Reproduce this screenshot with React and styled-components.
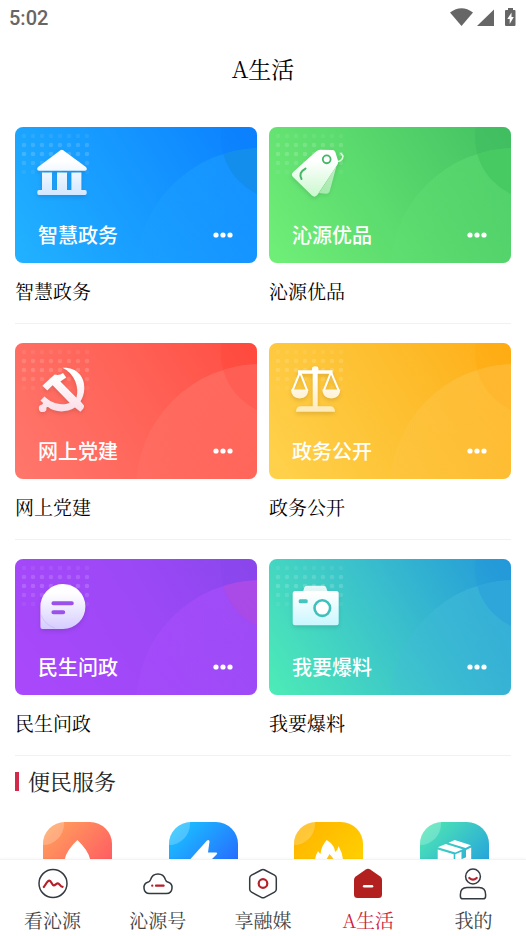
import React from 'react';
import styled, { createGlobalStyle } from 'styled-components';

const serif = "'Noto Serif CJK SC', 'Noto Serif SC', 'Liberation Serif', 'Noto Sans CJK SC', serif";
const sans = "'Noto Sans CJK SC', sans-serif";

const GlobalStyle = createGlobalStyle`
  * {
    box-sizing: border-box;
  }

  body {
    margin: 0;
    background: #fff;
    color: #000;
    font-family: ${serif};
  }

  a {
    color: inherit;
    text-decoration: none;
  }
`;

const Screen = styled.div`
  display: flex;
  flex-direction: column;
  height: 100vh;
`;

const StatusBar = styled.div`
  flex: none;
  display: flex;
  align-items: center;
  justify-content: space-between;
  height: 36px;
  padding: 0 8px 0 9px;
  color: #666;
  font: 500 20px/36px Roboto, sans-serif;
`;

const StatusIcons = styled.svg`
  display: block;
  width: 68px;
  height: 20px;
`;

const Header = styled.header`
  flex: none;
  display: flex;
  align-items: center;
  justify-content: center;
  height: 65px;
`;

const Title = styled.h1`
  margin: 0;
  font-size: 23px;
  font-weight: 400;
  line-height: 32px;
`;

const Content = styled.main`
  flex: 1;
  min-height: 0;
  overflow-y: auto;
  padding-top: 26px;
  scrollbar-width: none;
`;

const CardRow = styled.section`
  display: grid;
  grid-template-columns: 1fr 1fr;
  column-gap: 12px;
  margin: 0 15px 19px;
  border-bottom: 1px solid #f1f1f1;
`;

const CardLink = styled.a`
  display: block;
`;

const Card = styled.div`
  position: relative;
  display: flex;
  align-items: flex-end;
  justify-content: space-between;
  aspect-ratio: 16 / 9;
  padding: 0 24px 14px 23px;
  overflow: hidden;
  border-radius: 8px;
  background: ${(props) => props.$background};
  color: #fff;
`;

const CardArt = styled.svg`
  position: absolute;
  inset: 0;
  width: 100%;
  height: 100%;
`;

const CardName = styled.span`
  position: relative;
  font: 500 20px/28px ${sans};
`;

const More = styled.svg`
  position: relative;
  width: 20px;
  height: 28px;
`;

const Caption = styled.div`
  height: 60px;
  font-size: 19px;
  line-height: 56px;
`;

const SectionTitle = styled.h2`
  display: flex;
  align-items: center;
  gap: 9px;
  margin: 0 15px;
  height: 12px;
  color: #222;
  font-size: 22px;
  font-weight: 400;
  line-height: 28px;

  &::before {
    content: '';
    width: 4px;
    height: 19px;
    background: #d12a4a;
  }
`;

const Services = styled.div`
  display: grid;
  grid-template-columns: repeat(4, 1fr);
  justify-items: center;
  padding: 35px 9px 24px 15px;
`;

const ServiceLink = styled.a`
  display: block;
  width: 69px;
  height: 69px;
  overflow: hidden;
  border-radius: 22px;
  background: ${(props) => props.$background};

  svg {
    display: block;
  }
`;

const TabBar = styled.nav`
  flex: none;
  display: flex;
  height: 77px;
  border-top: 1px solid #f3f3f3;
  background: #fff;
  box-shadow: 0 -1px 2px rgba(0, 0, 0, 0.03);
  z-index: 1;
`;

const Tab = styled.a`
  flex: 1;
  display: flex;
  flex-direction: column;
  align-items: center;
  gap: 7px;
  padding-top: 9px;
  color: ${(props) => (props.$active ? '#cf1f42' : '#444')} !important;
  font-size: 19px;
  line-height: 28px;

  svg {
    width: 30px;
    height: 30px;
    overflow: visible;
  }
`;

const CARDS = [
  [
    {
      id: 'gov',
      name: '智慧政务',
      background: 'linear-gradient(58deg, #22b2ff 0%, #1597ff 55%, #0b7fff 100%)',
      corner: '#0d80fa',
      wave: 'rgba(30, 163, 255, 0.55)',
      overlap: 'rgba(20, 140, 230, 0.75)',
      shade: '#cfe6ff',
    },
    {
      id: 'goods',
      name: '沁源优品',
      background: 'linear-gradient(58deg, #70ef78 0%, #57d66c 55%, #42c062 100%)',
      corner: '#3db85e',
      wave: 'rgba(98, 226, 116, 0.5)',
      overlap: 'rgba(70, 200, 96, 0.8)',
      shade: '#c9f8cd',
    },
  ],
  [
    {
      id: 'party',
      name: '网上党建',
      background: 'linear-gradient(58deg, #ff776c 0%, #ff6257 55%, #ff4d42 100%)',
      corner: '#ff453a',
      wave: 'rgba(255, 124, 112, 0.6)',
      overlap: 'rgba(255, 92, 82, 0.8)',
      shade: '#fbdbe6',
    },
    {
      id: 'open',
      name: '政务公开',
      background: 'linear-gradient(58deg, #ffd24c 0%, #fdbf30 55%, #ffad16 100%)',
      corner: '#ffa90e',
      wave: 'rgba(255, 199, 76, 0.6)',
      overlap: 'rgba(255, 182, 46, 0.8)',
      shade: '#ffe9b4',
    },
  ],
  [
    {
      id: 'ask',
      name: '民生问政',
      background: 'linear-gradient(58deg, #aa48fb 0%, #9d48f7 55%, #8947ec 100%)',
      corner: '#8947ea',
      wave: 'rgba(176, 80, 255, 0.55)',
      overlap: 'rgba(172, 74, 228, 0.85)',
      shade: '#d5ccff',
    },
    {
      id: 'report',
      name: '我要爆料',
      background: 'linear-gradient(58deg, #4decb6 0%, #3ac0cc 52%, #2398da 100%)',
      corner: '#2299da',
      wave: 'rgba(66, 188, 216, 0.6)',
      overlap: 'rgba(46, 164, 218, 0.8)',
      shade: '#c3f5ff',
    },
  ],
];

const cardIcons = {
  gov: (
    <>
      <path d="M45.4 23.1q1.4-.8 2.8 0L70.6 39.6q1.2 1 1.2 2.4 0 1.8-1.8 1.8H24q-1.8 0-1.8-1.8 0-1.4 1.2-2.4z" />
      <path d="M27 45.4h10V63h5V45.4h10V63h4.4V45.4h10V63H70q1.7 0 1.7 1.7v1.5q0 1.7-1.7 1.7H24q-1.7 0-1.7-1.7v-1.5Q22.3 63 24 63h3z" />
    </>
  ),
  goods: (
    <>
      <path d="M67.500 39 60.800 63.800q-.8 3-3.800 2.800L50 66z" opacity=".65" />
      <path d="M51 22.8 63.5 23q2 .1 2.8 2l2.5 8q.8 2.8-.7 5L48.5 67.8q-2.6 3.2-5.6.6L24 50q-2.4-2.6.2-5L47.3 24.2q1.7-1.3 3.7-1.4z" />
      <circle cx="57.7" cy="32.3" r="3.9" fill="none" stroke="#43b866" strokeWidth="1.8" />
      <path d="M36.500 41.500q-7.500 4-4 10.500" fill="none" stroke="#43b866" strokeWidth="2" strokeLinecap="round" />
      <path d="M69 34.500q4.500-1 5-5.500l-2.500-3" fill="none" stroke="#ddffdf" strokeWidth="1.500" />
    </>
  ),
  party: (
    <path d="M47.500 24.800C62 24 70 34 69.300 46c-.2 5-1.700 9-3.800 12.200l3.500 4.200q.5 2.600-3.700 6.400l-5.300-4.300C51.500 69.800 40 69.600 33 64q-1-.4-1.600.6a3.800 3.800 0 1 1-4.100-3.200l.8-1.400-2.600-2.600 4-4C35.500 59.500 46 63.400 54.600 59.600L37.600 42.200l-5.300 5.300-5-4.900 12.400-11.200q4.500 1.400 8.300-1.500l3.200 4.500-5.800 4 16 16.200C64.500 45 60 30.500 47.500 24.800z" />
  ),
  open: (
    <>
      <rect x="43.7" y="24" width="5" height="42" />
      <circle cx="46.2" cy="26.6" r="3.3" />
      <path d="M29 27.3h34.5v3.4H29z" />
      <path d="M31 29 23.3 48M31 29l7.4 19M62 29l-7.4 19M62 29l8 19" fill="none" stroke="#fff" strokeWidth="2" />
      <path d="M22 46.5h17.3q-.2 8.8-8.6 9-8.3-.2-8.7-9zM53.3 46.5h18q-.3 8.800-9 9-8.600-.2-9-9z" />
      <path d="M27 68.8q0-5.7 5-5.7h29q5 0 5 5.7z" />
    </>
  ),
  ask: (
    <>
      <path d="M25.4 48.3A22.5 22.5 0 1 1 48 70H27.4q-2 0-2-2z" />
      <path d="M38.4 44.3h18.4M38.4 53.3h9.8" fill="none" stroke="#9b50ea" strokeWidth="4" strokeLinecap="round" />
      <path d="M26 56q4 10 14 13" fill="none" stroke="#bcaeed" strokeWidth="1" opacity=".5" />
    </>
  ),
  report: (
    <>
      <path d="M34 33l1.2-4.3q.6-2 2.8-2h16.5q2.200 0 2.800 2l1.400 4.300z" opacity=".85" />
      <rect x="23.7" y="32" width="46" height="34.3" rx="2.5" />
      <rect x="29.7" y="40.2" width="9" height="4" rx="1.5" fill="#45c5bd" />
      <circle cx="53.3" cy="49" r="7.8" fill="#fff" stroke="#3fc0bb" strokeWidth="2.6" />
    </>
  ),
};

const SERVICES = [
  {
    label: '水费',
    background: 'linear-gradient(135deg, #ffa25c 5%, #ff5f62 75%)',
    icon: <path d="M34.4 18q13 12.500 13 22.500a13 13 0 0 1-26 0q0-10 13-22.500z" fill="#fff" />,
  },
  {
    label: '电费',
    background: 'linear-gradient(135deg, #19c6ff 5%, #2868ff 80%)',
    icon: <path d="M38 18.500 21 37.500q-.5 1.500 1 1.500h8l-3 14 21-21q.5-1.500-1-1.500h-8l1.500-11q-.3-2.500-2.500-1z" fill="#fff" />,
  },
  {
    label: '燃气',
    background: 'linear-gradient(135deg, #ffb400 5%, #ffcf00 75%)',
    icon: (
      <>
        <path d="M32.700 18q8 5 8.300 12 3-2 3.500-6 4.500 8 4.500 15a14 14 0 0 1-28 0q0-5 3-10 1 2 2.500 3 .8-8 6.200-14z" fill="#fff" />
        <path d="M35.500 32q5 5 5 10h-10q2-5 5-10z" fill="#ffc21c" />
      </>
    ),
  },
  {
    label: '快递',
    background: 'linear-gradient(135deg, #4fe8b2 5%, #25a2dd 80%)',
    icon: (
      <>
        <path d="M28.500 20.700 34.700 18 51 23.200l-5.500 2.800zM17.700 25.300l8-3.300 17 5.300-7.400 3.200z" fill="#fff" />
        <path d="M17.700 27.500l16 4.800V54l-16-5zM35.300 32.300l6.200-2.500v7.400l4.500-2v-7.200l5.200-2.500V48l-15.900 6z" fill="#fff" />
      </>
    ),
  },
];

const line = { fill: 'none', stroke: '#333a40', strokeWidth: 1.5, strokeLinecap: 'round', strokeLinejoin: 'round' };
const red = { ...line, stroke: '#b5202a', strokeWidth: 2.2 };

const TABS = [
  {
    label: '看沁源',
    icon: (
      <>
        <circle cx="15" cy="14.500" r="14" {...line} />
        <path d="M5.800 18c2-2.500 3.500-6.300 5.600-6.300 2 0 2.400 4.600 4.400 4.600 1.500 0 2.500-2 4-2 1.800 0 2.400 3.500 4.800 3.500" {...red} />
      </>
    ),
  },
  {
    label: '沁源号',
    icon: (
      <>
        <path d="M6.500 24.500h17a5.800 5.800 0 0 0 1.200-11.400c-1.400-.3-1.700-1-2.200-2.400-2.400-7.700-12.600-7.700-15 0-.5 1.400-.9 2-2.200 2.400a5.800 5.800 0 0 0 1.200 11.400z" {...line} />
        <path d="M9.200 16.700h.1M13 16.700h7.600" {...red} />
      </>
    ),
  },
  {
    label: '享融媒',
    icon: (
      <>
        <path d="M13.300 1q1.700-.9 3.400 0l9.800 5.200q1.800 1 1.800 3v11q0 2-1.800 3l-9.800 5.200q-1.700.9-3.400 0l-9.800-5.200q-1.800-1-1.800-3v-11q0-2 1.800-3z" {...line} />
        <circle cx="15" cy="14.500" r="4.300" {...red} />
      </>
    ),
  },
  {
    label: 'A生活',
    active: true,
    icon: (
      <>
        <path d="M12.800.4q2.200-1.400 4.400 0l10.100 7.100Q29 8.800 29 11v14.500q0 3.500-3.500 3.500h-21Q1 29 1 25.500V11q0-2.200 1.700-3.500z" fill="#b32020" />
        <path d="M11.200 17.300h7.800" stroke="#fff" strokeWidth="2.600" strokeLinecap="round" />
      </>
    ),
  },
  {
    label: '我的',
    icon: (
      <>
        <circle cx="15" cy="7.500" r="7.400" {...line} />
        <path d="M11.300 9q3.700 3.200 7.400 0" {...red} />
        <path d="M9 18.400h12q6.600 0 6.600 7v1.800q0 2.600-2.600 2.600H5q-2.600 0-2.600-2.600v-1.800q0-7 6.600-7z" {...line} />
      </>
    ),
  },
];

const dotRows = [0.07, 0.14, 0.16, 0.12, 0.06];

const ServiceCard = ({ card }) => (
  <CardLink href={`#${card.id}`}>
    <Card $background={card.background}>
      <CardArt viewBox="0 0 242 136" aria-hidden="true">
        <defs>
          <linearGradient id={`${card.id}-fill`} gradientUnits="userSpaceOnUse" x1="0" y1="34" x2="0" y2="70">
            <stop offset="0" stopColor="#fff" />
            <stop offset="1" stopColor={card.shade} />
          </linearGradient>
          <linearGradient id={`${card.id}-wave`} x1=".5" y1="0" x2=".1" y2=".55">
            <stop offset="0" stopColor={card.wave} />
            <stop offset="1" stopColor={card.wave} stopOpacity=".3" />
          </linearGradient>
          <clipPath id={`${card.id}-clip`}>
            <circle cx="246" cy="146" r="125" />
          </clipPath>
        </defs>
        {dotRows.map((opacity, row) =>
          Array.from({ length: 8 }, (_, col) => (
            <circle key={`${row}-${col}`} cx={9 + col * 9} cy={9 + row * 9} r="2.300" fill="#fff" opacity={opacity} />
          ))
        )}
        <circle cx="269" cy="10" r="63" fill={card.corner} opacity=".4" />
        <circle cx="246" cy="146" r="125" fill={`url(#${card.id}-wave)`} />
        <circle cx="269" cy="10" r="63" fill={card.overlap} clipPath={`url(#${card.id}-clip)`} />
        <g fill={`url(#${card.id}-fill)`} style={{ filter: 'drop-shadow(0 2px 2px rgba(0, 0, 0, 0.12))' }}>
          {cardIcons[card.id]}
        </g>
      </CardArt>
      <CardName>{card.name}</CardName>
      <More viewBox="0 0 20 28" fill="#fff" aria-hidden="true">
        <circle cx="3" cy="14" r="2.600" />
        <circle cx="10" cy="14" r="2.600" />
        <circle cx="17" cy="14" r="2.600" />
      </More>
    </Card>
    <Caption>{card.name}</Caption>
  </CardLink>
);

const App = () => {
  return (
    <>
      <GlobalStyle />
      <Screen>
        <StatusBar>
          <span>5:02</span>
          <StatusIcons viewBox="0 0 68 20" fill="#666" aria-hidden="true">
            <path d="M0 4.500q11.500-8.500 23 0L11.500 18z" />
            <path d="M44 1.500V18H27z" />
            <path
              fillRule="evenodd"
              d="M58 0h5v2h1.500q1 0 1 1v14q0 1-1 1h-8.500q-1 0-1-1V3q0-1 1-1H58zM61.500 4.500l-4.200 6.500h2.400v5l4.100-7h-2.300z"
            />
          </StatusIcons>
        </StatusBar>
        <Header>
          <Title>A生活</Title>
        </Header>
        <Content>
          {CARDS.map((row) => (
            <CardRow key={row[0].id}>
              {row.map((card) => (
                <ServiceCard key={card.id} card={card} />
              ))}
            </CardRow>
          ))}
          <SectionTitle>便民服务</SectionTitle>
          <Services>
            {SERVICES.map((service) => (
              <ServiceLink key={service.label} href="#service" aria-label={service.label} $background={service.background}>
                <svg width="69" height="69" viewBox="0 0 69 69" aria-hidden="true">
                  <circle cx="0" cy="2" r="21" fill="#fff" opacity=".22" />
                  {service.icon}
                </svg>
              </ServiceLink>
            ))}
          </Services>
        </Content>
        <TabBar>
          {TABS.map((tab) => (
            <Tab key={tab.label} href="#tab" $active={tab.active}>
              <svg viewBox="0 0 30 30" aria-hidden="true">
                {tab.icon}
              </svg>
              {tab.label}
            </Tab>
          ))}
        </TabBar>
      </Screen>
    </>
  );
};

export default App;
